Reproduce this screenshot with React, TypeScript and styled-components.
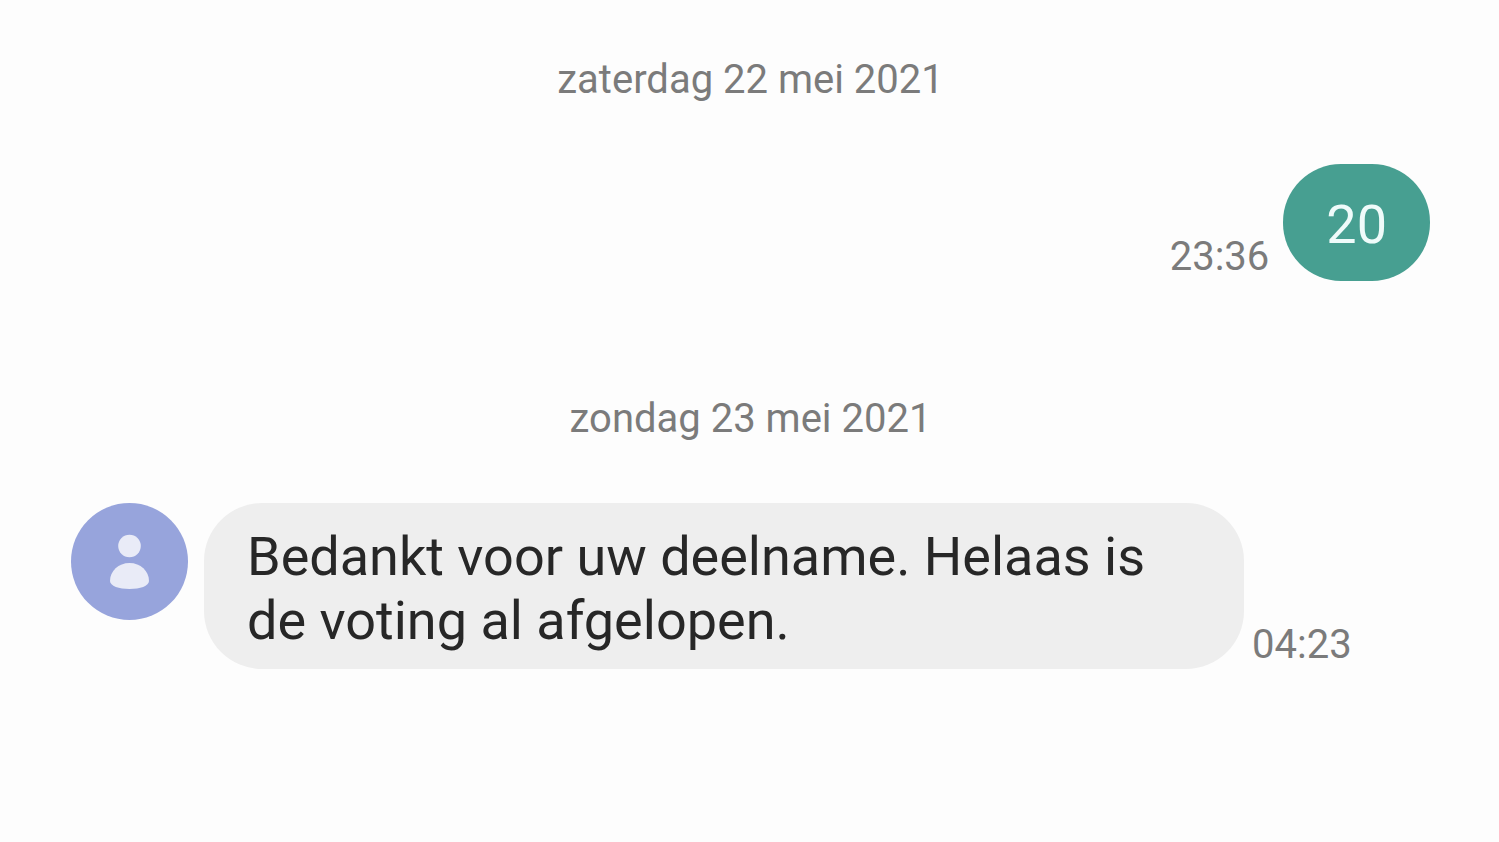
import React from 'react';
import styled, { createGlobalStyle } from 'styled-components';

const GlobalStyle = createGlobalStyle`
  * { box-sizing: border-box; }
  body {
    margin: 0;
    background: #fdfdfd;
    font-family: Roboto, "Liberation Sans", sans-serif;
  }
`;

const Thread = styled.main`
  display: flex;
  flex-direction: column;
  min-height: 100vh;
  padding: 56px 69px 0 71px;
`;

const DateLabel = styled.h2`
  margin: 0;
  text-align: center;
  font-size: 40px;
  line-height: 48px;
  font-weight: 400;
  color: #7b7b7b;
`;

const MessageRow = styled.article<{ $sent?: boolean }>`
  display: flex;
  align-items: flex-end;
  justify-content: ${({ $sent }) => ($sent ? 'flex-end' : 'flex-start')};
  gap: ${({ $sent }) => ($sent ? '14px' : '8px')};
  margin: 60px 0 ${({ $sent }) => ($sent ? '114px' : '0')};
`;

const Bubble = styled.p<{ $sent?: boolean }>`
  margin: 0;
  padding: ${({ $sent }) => ($sent ? '29px 43px 24px' : '22px 43px 16px')};
  border-radius: 58px;
  font-size: 54px;
  line-height: 64px;
  max-width: 1040px;
  color: ${({ $sent }) => ($sent ? '#effbfa' : '#272727')};
  background: ${({ $sent }) => ($sent ? '#479f91' : '#eeeeee')};
`;

const Time = styled.time`
  flex: none;
  font-size: 40px;
  line-height: 48px;
  color: #7b7b7b;
`;

const Avatar = styled.svg`
  flex: none;
  align-self: flex-start;
  width: 117px;
  height: 117px;
  margin-right: 8px;
`;

export default function App() {
  return (
    <>
      <GlobalStyle />
      <Thread>
        <DateLabel>zaterdag 22 mei 2021</DateLabel>
        <MessageRow $sent>
          <Time>23:36</Time>
          <Bubble $sent>20</Bubble>
        </MessageRow>
        <DateLabel>zondag 23 mei 2021</DateLabel>
        <MessageRow>
          <Avatar viewBox="0 0 117 117" aria-hidden="true">
            <circle cx="58.5" cy="58.5" r="58.5" fill="#97a4dc" />
            <circle cx="58.5" cy="43" r="11.3" fill="#e9ebf7" />
            <path d="M39 78C39 68 47.5 60 58.5 60S78 68 78 78C78 83 69 86 58.5 86S39 83 39 78Z" fill="#e9ebf7" />
          </Avatar>
          <Bubble>Bedankt voor uw deelname. Helaas is de voting al afgelopen.</Bubble>
          <Time>04:23</Time>
        </MessageRow>
      </Thread>
    </>
  );
}
